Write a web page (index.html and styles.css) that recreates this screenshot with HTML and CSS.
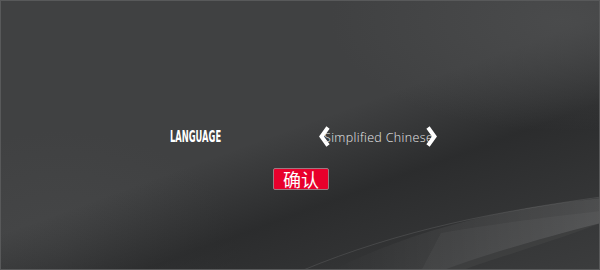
FILE: index.html
```html
<!DOCTYPE html>
<html lang="zh">

<head>
    <meta charset="utf-8" />
    <title>Language</title>
    <link rel="stylesheet" href="styles.css">
</head>

<body>
    <div class="stage">
        <svg class="streaks" width="600" height="270" viewBox="0 0 600 270">
            <defs>
                <linearGradient id="sheen" x1="0" y1="0" x2="1" y2="0">
                    <stop offset="0" stop-color="#ffffff" stop-opacity="0" />
                    <stop offset="0.6" stop-color="#ffffff" stop-opacity="0.07" />
                    <stop offset="1" stop-color="#ffffff" stop-opacity="0.12" />
                </linearGradient>
            </defs>
            <path d="M330 270 C400 235 480 210 600 197 L600 222 C530 240 480 255 440 270 Z" fill="url(#sheen)" />
            <path d="M300 270 C400 228 500 210 600 196" stroke="#ffffff" stroke-opacity="0.1" fill="none" />
            <path d="M420 270 L440 232 C500 222 560 214 600 210 L600 222 C540 245 490 258 460 270 Z" fill="#ffffff" fill-opacity="0.035" />
        </svg>
        <div class="lang-row">
            <span class="label">LANGUAGE</span>
            <div class="chooser">
                <svg class="arrow" width="12" height="21" viewBox="0 0 12 21">
                    <path d="M10 1.5 L3.5 10.5 L10 19.5" stroke="#fff" stroke-width="4" stroke-linejoin="miter" fill="none" />
                </svg>
                <span class="value">Simplified Chinese</span>
                <svg class="arrow" width="12" height="21" viewBox="0 0 12 21">
                    <path d="M2 1.5 L8.5 10.5 L2 19.5" stroke="#fff" stroke-width="4" stroke-linejoin="miter" fill="none" />
                </svg>
            </div>
        </div>
        <button class="confirm">确认</button>
    </div>
</body>

</html>
```
FILE: styles.css
```css
html,
body {
    margin: 0;
    padding: 0;
    background: #3a3b3c;
}

.stage {
    position: relative;
    width: 598px;
    height: 268px;
    border: 1px solid #58595a;
    overflow: hidden;
    background:
        radial-gradient(ellipse 230px 110px at 560px 20px, rgba(78, 79, 80, 0.7), rgba(78, 79, 80, 0)),
        linear-gradient(160deg, rgba(0, 0, 0, 0) 48%, rgba(18, 19, 20, 0.45) 66%, rgba(18, 19, 20, 0.25) 85%, rgba(18, 19, 20, 0.1) 100%),
        radial-gradient(ellipse 180px 120px at 60px 250px, rgba(80, 81, 82, 0.35), rgba(80, 81, 82, 0)),
        #404142;
}

.streaks {
    position: absolute;
    left: 0;
    top: 0;
}

.lang-row {
    position: relative;
    display: flex;
    align-items: center;
    padding: 124px 0 0 169px;
    height: 22px;
}

.label {
    display: inline-block;
    width: 148px;
    font-family: "DejaVu Sans Condensed", "DejaVu Sans", sans-serif;
    font-stretch: condensed;
    font-weight: bold;
    font-size: 16px;
    color: #fff;
    transform: scaleX(0.58);
    transform-origin: left center;
}

.chooser {
    display: flex;
    align-items: center;
}

.value {
    margin: 2px -7px 0 -6px;
    font-family: "Open Sans", sans-serif;
    font-weight: 300;
    font-size: 12.5px;
    letter-spacing: 0.35px;
    color: #e8e8e8;
}

.confirm {
    position: relative;
    display: block;
    margin: 21px 0 0 272px;
    width: 56px;
    height: 22px;
    padding: 0;
    border: 1px solid #9a7a82;
    border-radius: 2px;
    background-color: #e8002c;
    color: #fff;
    font-family: "Noto Sans CJK SC", sans-serif;
    font-size: 18px;
    line-height: 16px;
    overflow: visible;
}
```
